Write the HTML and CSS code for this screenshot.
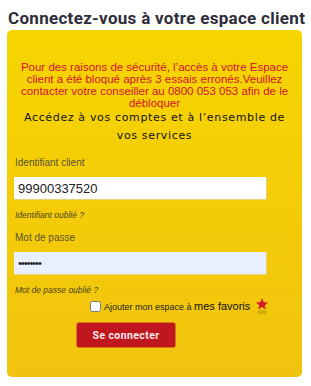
FILE: index.html
```html
<!DOCTYPE html>
<html lang="fr">
<head>
    <meta charset="UTF-8">
    <title>Connexion espace client</title>
    <link rel="stylesheet" href="styles.css">
</head>
<body>
<div class="login">
    <h1>Connectez-vous à votre espace client</h1>
    <div class="login-box">
        <p class="error">Pour des raisons de sécurité, l’accès à votre Espace client a été bloqué après 3 essais erronés.Veuillez contacter votre conseiller au 0800 053 053 afin de le débloquer</p>
        <p class="intro">Accédez à vos comptes et à l’ensemble de vos services</p>

        <label class="field-label" for="login">Identifiant client</label>
        <input type="text" id="login" class="field" value="99900337520">
        <a class="forgot" href="#">Identifiant oublié ?</a>

        <label class="field-label" for="password">Mot de passe</label>
        <input type="password" id="password" class="field field-filled" value="12345678">
        <a class="forgot forgot-last" href="#">Mot de passe oublié ?</a>

        <div class="favorite">
            <input type="checkbox" id="fav">
            <label for="fav">Ajouter mon espace à <span class="fav-strong">mes favoris</span></label>
            <svg class="star" width="14" height="18" viewBox="0 0 14 18">
                <ellipse cx="7" cy="15" rx="5" ry="2" fill="#b99a0c" opacity="0.6"/>
                <polygon points="7,1 8.7,5.2 13.2,5.4 9.7,8.2 10.9,12.6 7,10.1 3.1,12.6 4.3,8.2 0.8,5.4 5.3,5.2" fill="#d41b2b"/>
            </svg>
        </div>

        <button class="submit">Se connecter</button>
    </div>
</div>
</body>
</html>
```

FILE: styles.css
```css
body {
    margin: 0;
    background: #fff;
    font-family: Arial, "Liberation Sans", sans-serif;
}

.login {
    padding: 8px 9px 10px 7px;
}

h1 {
    margin: 0 0 2px 1px;
    font-family: Roboto, sans-serif;
    font-size: 17px;
    font-weight: bold;
    color: #2e2e3a;
    letter-spacing: 0.3px;
    line-height: 20px;
    white-space: nowrap;
}

.login-box {
    background: linear-gradient(#f6d500, #f1c30f);
    border-radius: 5px;
    padding: 31px 7px 29px 7px;
}

.error {
    margin: 0;
    font-size: 11.5px;
    line-height: 12px;
    color: #d2112f;
    text-align: center;
}

.intro {
    margin: 0 6px 12px;
    font-family: "DejaVu Sans", sans-serif;
    font-size: 11px;
    letter-spacing: 0.65px;
    line-height: 18px;
    color: #111;
    text-align: center;
}

.field-label {
    display: block;
    margin: 0 0 8px 1px;
    font-size: 10px;
    line-height: 12px;
    color: #5b5230;
}

.field {
    display: block;
    box-sizing: border-box;
    width: 253px;
    height: 23px;
    margin: 0;
    padding: 0 4px;
    border: 1px solid #e6d27a;
    border-width: 0 1px 1px 0;
    background: #fff;
    font-family: Arial, "Liberation Sans", sans-serif;
    font-size: 13px;
    color: #222;
    outline: none;
}

.field-filled {
    background: #e8f0fe;
    letter-spacing: -1px;
    font-size: 11px;
}

.forgot {
    display: block;
    margin: 10px 0 12px 1px;
    font-size: 8.5px;
    line-height: 10px;
    font-style: italic;
    color: #4a4320;
    text-decoration: none;
}

.forgot-last {
    margin-bottom: 2px;
}

.favorite {
    display: flex;
    align-items: center;
    margin: 0 0 0 76px;
    height: 18px;
}

.favorite input {
    width: 11px;
    height: 11px;
    margin: 0 3px 0 0;
}

.favorite label {
    font-size: 9px;
    color: #222;
}

.fav-strong {
    font-size: 11px;
    color: #111;
}

.star {
    margin-left: 5px;
}

.submit {
    display: block;
    margin: 7px 0 0 62px;
    width: 100px;
    height: 26px;
    border: 1px solid #d4761b;
    border-radius: 3px;
    background: #c0171e;
    color: #f6e8e8;
    font-family: Roboto, sans-serif;
    font-size: 10.5px;
    font-weight: bold;
    letter-spacing: 0.4px;
    cursor: pointer;
}
```
